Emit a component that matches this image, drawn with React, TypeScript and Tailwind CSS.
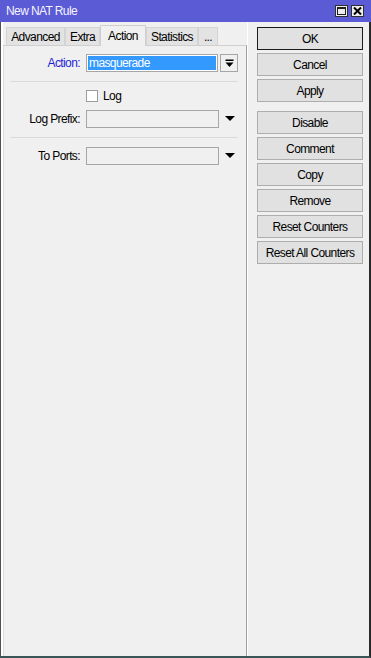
import React from 'react';

const buttonsTop = ['OK', 'Cancel', 'Apply'];
const buttonsBottom = ['Disable', 'Comment', 'Copy', 'Remove', 'Reset Counters', 'Reset All Counters'];

function Triangle() {
  return (
    <svg width="10" height="6" viewBox="0 0 10 6">
      <polygon points="0,0 10,0 5,5" fill="#000" />
    </svg>
  );
}

function BarArrow() {
  return (
    <svg width="9" height="9" viewBox="0 0 9 9">
      <rect x="0.5" y="0.5" width="8" height="1.5" fill="#000" />
      <polygon points="0.5,3.5 8.5,3.5 4.5,8" fill="#000" />
    </svg>
  );
}

function Tab({ label, width, active }: { label: string; width: number; active?: boolean }) {
  if (active) {
    return (
      <div
        className="relative -mb-px flex h-[21px] items-start justify-center border border-b-0 border-[#cfcfcf] bg-[#f0f0f0] pt-[4px] text-black"
        style={{ width }}
      >
        {label}
      </div>
    );
  }
  return (
    <div
      className="flex h-[18px] items-center justify-center border border-b-0 border-[#d4d4d4] bg-[#e3e3e3] pt-[1px] text-black"
      style={{ width }}
    >
      {label}
    </div>
  );
}

function WinButton({ label, isDefault }: { label: string; isDefault?: boolean }) {
  return (
    <div
      className={
        'flex h-[23px] w-[106px] items-center justify-center bg-[#e1e1e1] text-black ' +
        (isDefault ? 'border border-[#1a1a1a]' : 'border border-[#adadad]')
      }
    >
      {label}
    </div>
  );
}

export default function App() {
  return (
    <div className="flex h-[658px] w-[371px] flex-col bg-[#f0f0f0] font-['Liberation_Sans',Arial,sans-serif] text-[12px] leading-none tracking-[-0.6px]">
      {/* Title bar */}
      <div className="flex h-[22px] items-center justify-between bg-[#5b5bd6] pl-[6px] pr-[7px] text-[#f4f4ff]">
        <span>New NAT Rule</span>
        <div className="flex gap-[3px]">
          <div className="flex h-[12px] w-[13px] items-center justify-center border border-[#303030] bg-[#ececec]">
            <div className="h-[8px] w-[9px] border border-[#202020] border-t-2" />
          </div>
          <div className="flex h-[12px] w-[13px] items-center justify-center border border-[#303030] bg-[#ececec]">
            <svg width="9" height="8" viewBox="0 0 9 8">
              <path d="M1 0.5 L8 7.5 M8 0.5 L1 7.5" stroke="#000" strokeWidth="2" />
            </svg>
          </div>
        </div>
      </div>

      {/* Body */}
      <div className="flex flex-1 border-b-2 border-l border-r-2 border-b-[#3a5656] border-l-[#505050] border-r-[#2a2a2a]">
        <div className="flex flex-1 border-l-2 border-white">
          {/* Left: tabs + panel */}
          <div className="flex w-[244px] flex-col">
            <div className="flex h-[23px] items-end pl-[3px]">
              <Tab label="Advanced" width={59} />
              <Tab label="Extra" width={35} />
              <Tab label="Action" width={46} active />
              <Tab label="Statistics" width={52} />
              <Tab label="..." width={20} />
            </div>
            <div className="flex flex-1 flex-col border-l border-r border-t border-l-[#dcdcdc] border-r-[#a0a0a0] border-t-[#cfcfcf] pt-[8px]">
              {/* Action */}
              <div className="flex h-[18px] items-center">
                <div className="w-[76px] text-right text-[#1f1fd8]">Action:</div>
                <div className="ml-[6px] flex h-[18px] w-[132px] items-center border border-[#a6a6a6] bg-white p-px">
                  <div className="flex h-full w-full items-center bg-[#3399ff] pl-px text-white">masquerade</div>
                </div>
                <div className="ml-[2px] flex h-[18px] w-[18px] items-center justify-center border border-[#a6a6a6] bg-[#f0f0f0]">
                  <BarArrow />
                </div>
              </div>

              <div className="ml-[6px] mt-[9px] h-px w-[228px] bg-[#d9d9d9]" />

              {/* Log */}
              <div className="mt-[8px] flex h-[12px] items-center pl-[82px]">
                <div className="h-[12px] w-[12px] border border-[#9c9c9c] bg-white" />
                <span className="ml-[5px]">Log</span>
              </div>

              {/* Log Prefix */}
              <div className="mt-[8px] flex h-[18px] items-center">
                <div className="w-[76px] text-right">Log Prefix:</div>
                <div className="ml-[6px] h-[18px] w-[133px] border border-[#a6a6a6] bg-[#f0f0f0]" />
                <div className="ml-[6px] flex items-center">
                  <Triangle />
                </div>
              </div>

              <div className="ml-[6px] mt-[9px] h-px w-[228px] bg-[#d9d9d9]" />

              {/* To Ports */}
              <div className="mt-[9px] flex h-[18px] items-center">
                <div className="w-[76px] text-right">To Ports:</div>
                <div className="ml-[6px] h-[18px] w-[133px] border border-[#a6a6a6] bg-[#f0f0f0]" />
                <div className="ml-[6px] flex items-center">
                  <Triangle />
                </div>
              </div>
            </div>
          </div>

          {/* Right: buttons */}
          <div className="flex flex-1 flex-col border-l border-white pl-[9px] pt-[5px]">
            <div className="flex flex-col gap-[3px]">
              {buttonsTop.map((b) => (
                <WinButton key={b} label={b} isDefault={b === 'OK'} />
              ))}
            </div>
            <div className="mt-[9px] flex flex-col gap-[3px]">
              {buttonsBottom.map((b) => (
                <WinButton key={b} label={b} />
              ))}
            </div>
          </div>
        </div>
      </div>
    </div>
  );
}
